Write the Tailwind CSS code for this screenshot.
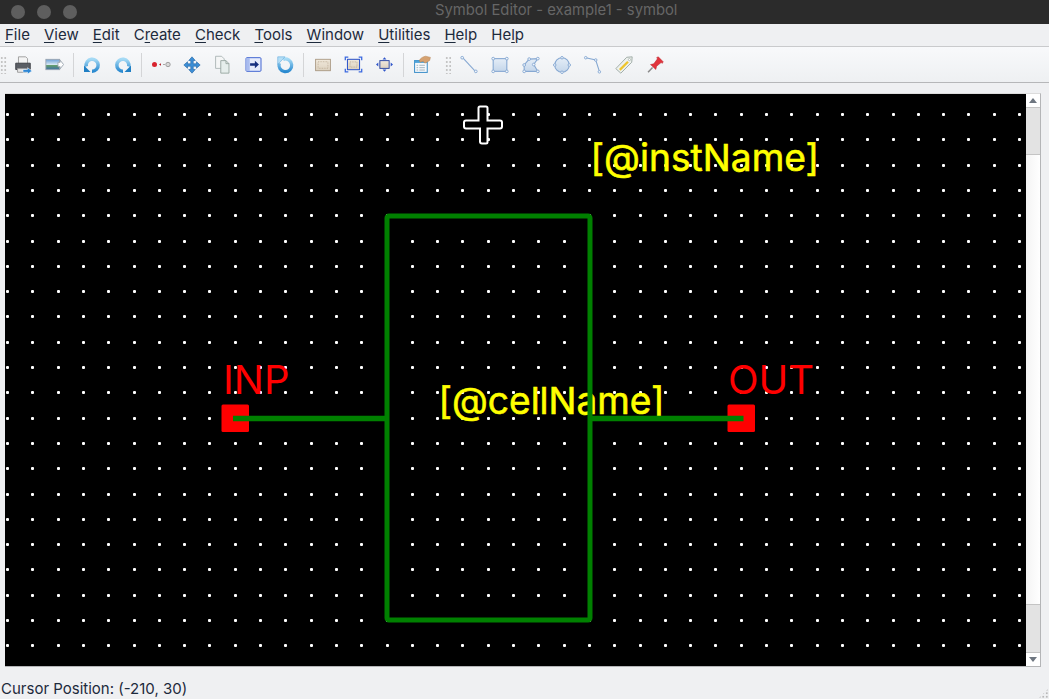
<!DOCTYPE html>
<html lang="en">
<head>
  <meta charset="UTF-8">
  <meta name="viewport" content="width=device-width, initial-scale=1.0">
  <script src="https://cdn.jsdelivr.net/npm/@tailwindcss/browser@4"></script>
  <title>Symbol Editor - example1 - symbol</title>
</head>
<body class="w-[1049px] h-[699px] overflow-hidden bg-[#eff0f2] font-['Inter',sans-serif] text-[#1d2a3c]">

<svg class="absolute w-0 h-0">
  <defs>
    <linearGradient id="ring" x1="0" y1="0" x2="0" y2="1"><stop offset="0" stop-color="#a5daf5"/><stop offset="1" stop-color="#2a8ad0"/></linearGradient>
    <linearGradient id="tan" x1="0" y1="0" x2="0" y2="1"><stop offset="0" stop-color="#f1e9dc"/><stop offset="1" stop-color="#dcd1bf"/></linearGradient>
    <linearGradient id="shape" x1="0" y1="0" x2="0" y2="1"><stop offset="0" stop-color="#e4edf7"/><stop offset="1" stop-color="#c4d6ea"/></linearGradient>
    <linearGradient id="land" x1="0" y1="0" x2="0" y2="1"><stop offset="0" stop-color="#6a9ed6"/><stop offset="0.5" stop-color="#d4e6f2"/><stop offset="0.6" stop-color="#5f9a6a"/><stop offset="1" stop-color="#3f6faa"/></linearGradient>
  </defs>
</svg>

<!-- title bar -->
<div class="h-6 bg-[#2b2b2b] flex items-center relative">
  <div class="flex gap-[12px] pl-[11px]">
    <span class="w-[14px] h-[14px] rounded-full bg-[#5e5e5e]"></span>
    <span class="w-[14px] h-[14px] rounded-full bg-[#5e5e5e]"></span>
    <span class="w-[14px] h-[14px] rounded-full bg-[#5e5e5e]"></span>
  </div>
  <div class="absolute left-[435px] top-[0px] text-[14.8px] leading-[20px] text-[#666666] whitespace-nowrap">Symbol Editor - example1 - symbol</div>
</div>

<!-- menu bar -->
<div class="h-[23px] flex items-center pl-[5px] gap-[14.1px] text-[15px] leading-[20px] border-b border-[#c9cacc] bg-[#eff0f2]">
  <span><span class="underline underline-offset-2">F</span>ile</span>
  <span><span class="underline underline-offset-2">V</span>iew</span>
  <span><span class="underline underline-offset-2">E</span>dit</span>
  <span>C<span class="underline underline-offset-2">r</span>eate</span>
  <span><span class="underline underline-offset-2">C</span>heck</span>
  <span><span class="underline underline-offset-2">T</span>ools</span>
  <span><span class="underline underline-offset-2">W</span>indow</span>
  <span><span class="underline underline-offset-2">U</span>tilities</span>
  <span><span class="underline underline-offset-2">H</span>elp</span>
  <span>He<span class="underline underline-offset-2">l</span>p</span>
</div>

<!-- toolbar -->
<div class="h-[36px] flex items-center bg-gradient-to-b from-[#f8f9fb] to-[#eef0f2] border-b border-[#b6b7b9]">
  <div class="w-[7px] h-[18px] bg-[radial-gradient(#c4c4c4_1px,transparent_1px)] bg-[length:3.500px_4px]"></div>

  <!-- print -->
  <div class="w-[32px] flex justify-center"><svg width="20" height="20" viewBox="0 0 22 22"><path d="M6 2h8l2 2v6H6z" fill="#f4f4f4" stroke="#9a9a9a"/><path d="M3 9h16v7H3z" fill="#5a5e64" stroke="#3d4045"/><path d="M5 15h10v4H5z" fill="#e8e8e8" stroke="#999"/><path d="M11 16h5v-2l5 3.500-5 3.500v-2h-5z" fill="#2c86d4" stroke="#fff" stroke-width=".6"/></svg></div>
  <!-- export image -->
  <div class="w-[31px] flex justify-center"><svg width="19" height="19" viewBox="0 0 22 22"><rect x="1" y="5" width="16" height="12" fill="url(#land)" stroke="#9aa5b0"/><path d="M15 8.500h2.500V6l4 5-4 5v-2.500H15z" fill="#fff" stroke="#97a1ab"/></svg></div>
  <div class="w-[6px] flex justify-center"><span class="w-px h-[24px] bg-[#d4d5d7]"></span></div>

  <!-- undo / redo -->
  <div class="w-[31px] flex justify-center"><svg width="22" height="22" viewBox="0 0 22 22"><path d="M5.300 12.500A6 6 0 1 1 11 17.200" fill="none" stroke="url(#ring)" stroke-width="3.500"/><path d="M3 11.500l6.500 6.500H3z" fill="#1f7fc4"/></svg></div>
  <div class="w-[31px] flex justify-center"><svg width="22" height="22" viewBox="0 0 22 22"><path d="M16.700 12.500A6 6 0 1 0 11 17.200" fill="none" stroke="url(#ring)" stroke-width="3.500"/><path d="M19 11.500L12.500 18H19z" fill="#1f7fc4"/></svg></div>
  <div class="w-[7px] flex justify-center"><span class="w-px h-[24px] bg-[#d4d5d7]"></span></div>

  <!-- stretch wire -->
  <div class="w-[31px] flex justify-center"><svg width="22" height="22" viewBox="0 0 22 22"><circle cx="4.500" cy="10.500" r="2.500" fill="#d8232e"/><path d="M9 10.500l2-1.300v2.600z" fill="#b3232b"/><path d="M13 10.500h2" stroke="#a8a8a8" stroke-width="1.200"/><circle cx="18" cy="10.500" r="2.200" fill="#d8d8d8" stroke="#a0a0a0"/></svg></div>
  <!-- move -->
  <div class="w-[31px] flex justify-center"><svg width="18" height="18" viewBox="0 0 22 22"><path d="M11 1l4 4.500h-2.500V9.500H16.500V7l4.500 4-4.500 4v-2.500H12.500v4H15l-4 4.500-4-4.500h2.500v-4H5.500V15L1 11l4.500-4v2.500h4V5.500H7z" fill="#3d8fd6" stroke="#1d5f9f" stroke-width=".7"/></svg></div>
  <!-- copy -->
  <div class="w-[31px] flex justify-center"><svg width="19" height="19" viewBox="0 0 22 22"><path d="M3 1.500h7l3 3v11H3z" fill="#f5f6f6" stroke="#a8b2b2"/><path d="M9 6.500h6l3.500 3.500v11H9z" fill="#e6eeec" stroke="#93a29d"/><path d="M15 6.500V10h3.500" fill="none" stroke="#93a29d"/></svg></div>
  <!-- move to -->
  <div class="w-[31px] flex justify-center"><svg width="17" height="15" viewBox="0 0 24 22"><rect x="1" y="1" width="22" height="20" rx="1.500" fill="#e6ecfc" stroke="#3b5fd0" stroke-width="1.400"/><rect x="1.500" y="1.500" width="5" height="19" fill="#a9bcef"/><path d="M7 9h7V5.500l6 5.500-6 5.500V13H7z" fill="#17307f"/></svg></div>
  <!-- rotate -->
  <div class="w-[31px] flex justify-center"><svg width="20" height="20" viewBox="0 0 22 22"><path d="M9 4.800A7 7 0 1 1 4.800 9" fill="none" stroke="url(#ring)" stroke-width="3.600"/><path d="M3 2h8L3 10.500z" fill="#b5dff6" stroke="#5aa5da" stroke-width=".6"/></svg></div>
  <div class="w-[7px] flex justify-center"><span class="w-px h-[24px] bg-[#d4d5d7]"></span></div>

  <!-- fit views -->
  <div class="w-[31px] flex justify-center"><svg width="18" height="18" viewBox="0 0 22 22"><rect x="2" y="4" width="18" height="14" fill="url(#tan)" stroke="#a3917a"/><rect x="5" y="7" width="12" height="8" fill="none" stroke="#b8a78f" stroke-dasharray="1 1"/></svg></div>
  <div class="w-[31px] flex justify-center"><svg width="19" height="19" viewBox="0 0 22 22"><rect x="4" y="5" width="14" height="12" fill="url(#tan)" stroke="#2f55c9" stroke-width="1.200"/><rect x="7" y="8" width="8" height="6" fill="none" stroke="#b8a78f" stroke-dasharray="1 1"/><path d="M1.500 6V2.500H5M17 2.500h3.500V6M20.500 16v3.500H17M5 19.500H1.500V16" fill="none" stroke="#3c6ae0" stroke-width="1.500"/></svg></div>
  <div class="w-[31px] flex justify-center"><svg width="17" height="17" viewBox="0 0 22 22"><rect x="5" y="6" width="12" height="10" fill="url(#tan)" stroke="#23409f" stroke-width="1.200"/><path d="M0 11l3-2.500v5zM22 11l-3-2.500v5zM11 1.500L8.500 4.500h5zM11 20.500L8.500 17.500h5z" fill="#2f55c9"/></svg></div>
  <div class="w-[6px] flex justify-center"><span class="w-px h-[24px] bg-[#d4d5d7]"></span></div>

  <!-- properties -->
  <div class="w-[32px] flex justify-center"><svg width="19" height="19" viewBox="0 0 24 24"><rect x="2" y="7" width="16" height="15" fill="#f6f9fc" stroke="#3d8fc9" stroke-width="1.300"/><rect x="2" y="7" width="16" height="3" fill="#4fa3d9"/><path d="M4.500 13h2M8 13h7M4.500 16h2M8 16h7M4.500 19h2M8 19h7" stroke="#8fa3af"/><path d="M8 7c1-3 5-5 8-5.500l6 1.500-1 4-5 3c-2 0-3-1-3-2l-4 1z" fill="#d6a271" stroke="#b3804f" stroke-width=".6"/></svg></div>
  <!-- grip -->
  <div class="w-[15px] flex justify-end pr-[2px]"><span class="w-[6px] h-[18px] bg-[radial-gradient(#c4c4c4_1px,transparent_1px)] bg-[length:3.500px_4px]"></span></div>

  <!-- draw shapes -->
  <div class="w-[31px] flex justify-center"><svg width="20" height="20" viewBox="0 0 22 22" fill="#f2f6fb" stroke="#86a8d2"><path d="M4 3l14 15" stroke-width="1.200"/><circle cx="3.500" cy="3" r="1.500"/><circle cx="18.500" cy="18" r="1.500"/></svg></div>
  <div class="w-[31px] flex justify-center"><svg width="20" height="20" viewBox="0 0 22 22" stroke="#86a8d2"><rect x="3.500" y="4" width="15" height="14" fill="url(#shape)" stroke-width="1.200"/><g fill="#f2f6fb"><circle cx="3.500" cy="4" r="1.500"/><circle cx="18.500" cy="4" r="1.500"/><circle cx="3.500" cy="18" r="1.500"/><circle cx="18.500" cy="18" r="1.500"/></g></svg></div>
  <div class="w-[31px] flex justify-center"><svg width="20" height="20" viewBox="0 0 22 22" stroke="#86a8d2"><path d="M3.500 18V11L9 4.500 18.500 4 14 10.500l4.500 7.500z" fill="url(#shape)" stroke-width="1.200"/><g fill="#f2f6fb"><circle cx="3.500" cy="18" r="1.500"/><circle cx="3.500" cy="11" r="1.500"/><circle cx="9" cy="4.500" r="1.500"/><circle cx="18.500" cy="4" r="1.500"/><circle cx="14" cy="10.500" r="1.500"/><circle cx="18.500" cy="18" r="1.500"/></g></svg></div>
  <div class="w-[31px] flex justify-center"><svg width="20" height="20" viewBox="0 0 22 22" stroke="#86a8d2"><circle cx="11" cy="11" r="8" fill="url(#shape)" stroke-width="1.200"/><g fill="#f2f6fb"><circle cx="11" cy="3" r="1.400"/><circle cx="3" cy="11" r="1.400"/><circle cx="19" cy="11" r="1.400"/><circle cx="11" cy="19" r="1.400"/></g></svg></div>
  <div class="w-[31px] flex justify-center"><svg width="20" height="20" viewBox="0 0 22 22" fill="#f2f6fb" stroke="#86a8d2"><path d="M3 3l11 2.500L18 18" fill="none" stroke-width="1.200"/><circle cx="3" cy="3" r="1.400"/><circle cx="14" cy="5.500" r="1.400"/><circle cx="18" cy="18.500" r="1.400"/></svg></div>
  <!-- label -->
  <div class="w-[31px] flex justify-center"><svg width="20" height="20" viewBox="0 0 22 22"><path d="M2 15L14 2.500l6-.5-.5 6L7.500 20z" fill="#eef1ee" stroke="#9aa8a2"/><path d="M5.500 15.500L14.500 6.500l1.800 1.800L7.300 17.300z" fill="#eec52f"/><circle cx="17" cy="5" r="1.200" fill="#fff" stroke="#9aa8a2" stroke-width=".7"/></svg></div>
  <!-- pin -->
  <div class="w-[31px] flex justify-center"><svg width="18" height="18" viewBox="0 0 22 22"><path d="M8 14l-5.500 6" stroke="#8a8a8a" stroke-width="1.800"/><path d="M5.500 10.500l4-1L14 3.500l-1-1.500 2-1 6 6-1 2-1.500-1-5.500 4.500-1 4z" fill="#e2333c" stroke="#b7252c" stroke-width=".6"/></svg></div>
</div>

<!-- canvas + scrollbar -->
<div class="pl-[5px] pt-[10px] pr-[8px] h-[585px]">
  <div class="flex h-[574px] border-t border-t-[#dcdcdc] border-b border-b-[#b4b5b7] border-r border-r-[#b4b5b7]">
    <svg id="canvas" class="block w-[1021px] h-[572px] bg-black shrink-0" viewBox="5 94 1021 572" font-family="Inter, sans-serif">
      <g id="dots" fill="#ffffff"></g>
      <text x="590.500" y="171" font-size="37.200" fill="#ffff00" stroke="#ffff00" stroke-width=".6">[@instName]</text>
      <text x="438.500" y="414" font-size="37.100" fill="#ffff00" stroke="#ffff00" stroke-width=".6">[@cellName]</text>
      <text x="223" y="394" font-size="40" fill="#ff0000">INP</text>
      <text x="728" y="394" font-size="40" fill="#ff0000">OUT</text>
      <rect x="221.500" y="404.500" width="27.500" height="27.500" rx="1.500" fill="#ff0000"/>
      <rect x="727.500" y="404.500" width="27.500" height="27.500" rx="1.500" fill="#ff0000"/>
      <rect x="387" y="216" width="203" height="404" rx="2" fill="none" stroke="#008000" stroke-width="5"/>
      <path d="M233 418.500H387M590 418.500H743.500" fill="none" stroke="#008000" stroke-width="5.500"/>
      <path d="M480 106.500h6a1.500 1.500 0 0 1 1.500 1.500v12.500H500a2 2 0 0 1 2 2v4a2 2 0 0 1-2 2H487.500V142a1.500 1.500 0 0 1-1.500 1.500h-4a2 2 0 0 1-2-2V128.500H466a2 2 0 0 1-2-2v-4a2 2 0 0 1 2-2h12.500V108a1.500 1.500 0 0 1 1.500-1.500z" fill="#000000" stroke="#ffffff" stroke-width="2"/>
    </svg>
    <div class="w-[14px] flex flex-col bg-white">
      <div class="h-[13px] flex items-center justify-center"><span class="w-0 h-0 border-l-[4px] border-r-[4px] border-b-[5px] border-l-transparent border-r-transparent border-b-[#6e7680]"></span></div>
      <div class="h-[48px] bg-[#e3e3e3] border-y border-[#c4c4c4]"></div>
      <div class="flex-1 bg-gradient-to-r from-[#f4f4f4] to-white"></div>
      <div class="h-[49px] bg-[#e3e3e3] border-y border-[#c4c4c4]"></div>
      <div class="h-[13px] flex items-center justify-center"><span class="w-0 h-0 border-l-[4px] border-r-[4px] border-t-[5px] border-l-transparent border-r-transparent border-t-[#6e7680]"></span></div>
    </div>
  </div>
</div>

<!-- status bar -->
<div class="relative h-[31px] pl-[1px] pt-[11px] text-[15px] leading-[20px] whitespace-nowrap">
  Cursor Position: (-210, 30)
  <div class="absolute right-0 bottom-0 w-[11px] h-[11px] bg-[radial-gradient(#b8b8b8_1px,transparent_1px)] bg-[length:3.500px_3.500px] [clip-path:polygon(100%_0,100%_100%,0_100%)]"></div>
</div>

<script>
  // background grid of the editor
  let dots = document.getElementById('dots');
  let markup = '';
  for (let i = 0; i <= 40; i++) {
    for (let j = 0; j <= 21; j++) {
      let x = Math.round(6 + i * 25.3);
      let y = Math.round(113 + j * 25.3);
      markup += `<rect x="${x}" y="${y}" width="3" height="3" rx="1" />`;
    }
  }
  dots.innerHTML = markup;
</script>
</body>
</html>
